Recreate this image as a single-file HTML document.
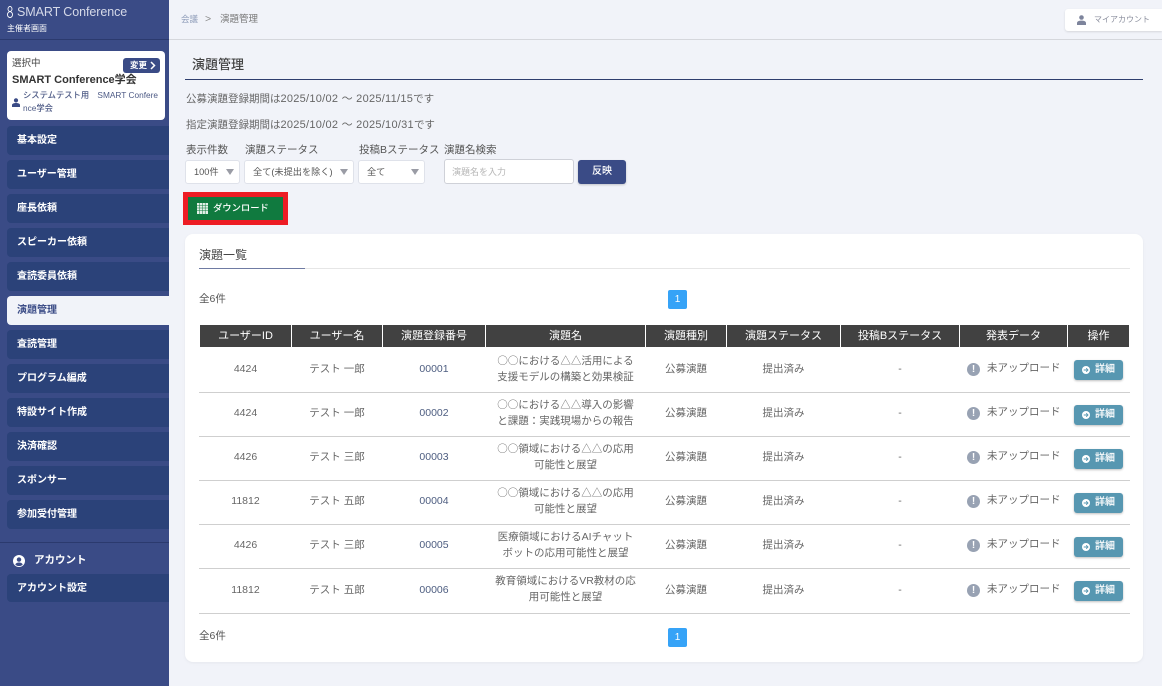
<!DOCTYPE html>
<html lang="ja"><head><meta charset="utf-8"><title>演題管理</title>
<style>
*{box-sizing:border-box}
html,body{margin:0;padding:0;width:1162px;height:686px;overflow:hidden;background:#f1f3f9;font-family:"Liberation Sans","Noto Sans CJK JP",sans-serif;color:#444}
.a{position:absolute;white-space:nowrap}
#side{position:absolute;left:0;top:0;width:169px;height:686px;background:#3a4b86}
.m{position:absolute;left:7px;width:162px;height:29px;background:#2b4279;border-radius:4px 0 0 4px;color:#fff;font-weight:700;font-size:10px;line-height:30px;padding-left:10px}
.m.on{background:#f1f3f9;color:#3a4b86}
.sel{position:absolute;background:#fff;border:1px solid #dfe2ea;border-radius:3px;height:24px;font-size:9.2px;line-height:23px;color:#555;padding-left:8px}
.sel:after{content:"";position:absolute;right:5px;top:8px;border:4.5px solid transparent;border-top:6px solid #9a9ca5;border-bottom:0}
.lb{font-size:10.5px;line-height:14px;color:#555;top:143px}
.th{position:absolute;top:325px;height:22px;background:#414141;color:#fff;font-size:11px;line-height:22px;text-align:center}
.c{position:absolute;text-align:center;font-size:10.5px;color:#666;white-space:nowrap;line-height:16px;padding-top:1px}
.c.t{padding-top:0}
.c b{font-weight:400;font-family:"Noto Sans CJK JP",sans-serif}
.ln{position:absolute;left:199px;width:931px;height:1px;background:#cfcfcf}
.btn{position:absolute;left:1074px;width:49px;height:20px;background:#5797b1;border-radius:3px;color:#f2f6f8;font-size:10px;font-weight:700;line-height:20px;padding-left:21px;box-shadow:0 1px 2px rgba(0,0,0,.25)}
.btn svg{position:absolute;left:8px;top:6px}
.ic{position:absolute;left:967px;width:13px;height:13px;border-radius:50%;background:#98a2b3;color:#fff;font-size:10px;font-weight:700;line-height:13px;text-align:center}
.pg{position:absolute;left:668px;width:19px;height:19px;background:#36a3f7;color:#fff;font-size:10px;line-height:19px;text-align:center;border-radius:2px}
.d{font-size:11px;letter-spacing:.27px}
</style></head><body>
<div id="side">
<svg class="a" style="left:7px;top:6px" width="6" height="12" viewBox="0 0 6 12"><g fill="none" stroke="#fff" stroke-width=".9"><ellipse cx="3" cy="3" rx="2" ry="2.500"/><ellipse cx="3" cy="8.600" rx="2.500" ry="2.900"/></g></svg>
<div class="a" style="left:17px;top:4px;font-size:12.5px;line-height:17px;color:#d5d9e8;letter-spacing:-.08px">SMART Conference</div>
<div class="a" style="left:7px;top:22px;font-size:8px;line-height:13px;color:#fff">主催者画面</div>
<div class="a" style="left:0;top:39px;width:169px;height:1px;background:#2b3a6e"></div>
<div class="a" style="left:7px;top:51px;width:158px;height:69px;background:#fff;border-radius:4px"></div>
<div class="a" style="left:12px;top:57px;font-size:9.500px;line-height:14px;color:#444">選択中</div>
<div class="a" style="left:123px;top:58px;width:37px;height:15px;background:#3a4b86;border-radius:3px;color:#fff;font-size:8.500px;font-weight:700;line-height:14px;padding-left:7px">変更
<svg class="a" style="left:27px;top:3px" width="6" height="9" viewBox="0 0 6 9"><path d="M1 1l3.500 3.500L1 8" fill="none" stroke="#fff" stroke-width="1.500"/></svg></div>
<div class="a" style="left:12px;top:72px;font-size:11px;font-weight:700;line-height:16px;color:#333">SMART Conference学会</div>
<svg class="a" style="left:12px;top:98px" width="8" height="9" viewBox="0 0 8 9"><circle cx="4" cy="2.400" r="2.100" fill="#3a4b86"/><path d="M0 9V7C0 5.600 2 5 4 5S8 5.600 8 7V9Z" fill="#3a4b86"/></svg>
<div class="a" style="left:23px;top:89px;font-size:8.300px;line-height:12.500px;color:#4d5a85;font-weight:500">システムテスト用　SMART Confere<br>nce学会</div>
<div class="m" style="top:126px">基本設定</div>
<div class="m" style="top:160px">ユーザー管理</div>
<div class="m" style="top:194px">座長依頼</div>
<div class="m" style="top:228px">スピーカー依頼</div>
<div class="m" style="top:262px">査読委員依頼</div>
<div class="m on" style="top:296px">演題管理</div>
<div class="m" style="top:330px">査読管理</div>
<div class="m" style="top:364px">プログラム編成</div>
<div class="m" style="top:398px">特設サイト作成</div>
<div class="m" style="top:432px">決済確認</div>
<div class="m" style="top:466px">スポンサー</div>
<div class="m" style="top:500px">参加受付管理</div>
<div class="a" style="left:0;top:542px;width:169px;height:1px;background:#2b3a6e"></div>
<svg class="a" style="left:13px;top:555px" width="12" height="12" viewBox="0 0 12 12"><circle cx="6" cy="6" r="6" fill="#fff"/><circle cx="6" cy="4.600" r="2.200" fill="#3a4b86"/><path d="M2.300 9.600C3 7.900 4.500 7.500 6 7.500S9 7.900 9.700 9.600C8.700 10.600 7.400 11 6 11S3.300 10.600 2.300 9.600Z" fill="#3a4b86"/></svg>
<div class="a" style="left:34px;top:552px;font-size:10.500px;font-weight:700;line-height:16px;color:#fff">アカウント</div>
<div class="m" style="top:574px;height:28px">アカウント設定</div>
</div>

<div class="a" style="left:181px;top:12px;font-size:8.500px;line-height:14px;color:#8d9bb8">会議</div>
<div class="a" style="left:205px;top:12px;font-size:10.500px;line-height:14px;color:#888">&gt;</div>
<div class="a" style="left:220px;top:13px;font-size:9.500px;line-height:14px;color:#777">演題管理</div>
<div class="a" style="left:169px;top:39px;width:993px;height:1px;background:#d5d7dc"></div>
<div class="a" style="left:1065px;top:9px;width:97px;height:22px;background:#fff;border-radius:3px 0 0 3px;box-shadow:0 1px 2px rgba(0,0,0,.12)"></div>
<svg class="a" style="left:1077px;top:15px" width="9" height="10" viewBox="0 0 9 10"><circle cx="4.500" cy="2.500" r="2.300" fill="#7d849c"/><path d="M0 10V8C0 6.300 2.200 5.600 4.500 5.600S9 6.300 9 8V10Z" fill="#7d849c"/></svg>
<div class="a" style="left:1094px;top:13px;font-size:8px;line-height:14px;color:#8b8f9e">マイアカウント</div>

<div class="a" style="left:192px;top:55px;font-size:13px;font-weight:500;line-height:19px;color:#444">演題管理</div>
<div class="a" style="left:185px;top:79px;width:958px;height:1px;background:#2f3e6e"></div>
<div class="a" style="left:186px;top:91px;font-size:10.500px;line-height:16px;color:#666">公募演題登録期間は<span class="d">2025/10/02 ～ 2025/11/15</span>です</div>
<div class="a" style="left:186px;top:117px;font-size:10.500px;line-height:16px;color:#666">指定演題登録期間は<span class="d">2025/10/02 ～ 2025/10/31</span>です</div>

<div class="a lb" style="left:186px">表示件数</div>
<div class="a lb" style="left:245px">演題ステータス</div>
<div class="a lb" style="left:359px">投稿Bステータス</div>
<div class="a lb" style="left:444px">演題名検索</div>
<div class="sel" style="left:185px;top:160px;width:55px">100件</div>
<div class="sel" style="left:244px;top:160px;width:110px">全て(未提出を除く)</div>
<div class="sel" style="left:358px;top:160px;width:67px">全て</div>
<div class="a" style="left:444px;top:159px;width:130px;height:25px;background:#fff;border:1px solid #cfd1d8;border-radius:3px;font-size:9px;line-height:24px;padding-left:7px;color:#b5b5b5">演題名を入力</div>
<div class="a" style="left:578px;top:160px;width:48px;height:24px;background:#3a4b86;border-radius:3px;color:#fff;font-size:10px;font-weight:500;line-height:24px;text-align:center;box-shadow:0 1px 2px rgba(0,0,0,.2)">反映</div>

<div class="a" style="left:183px;top:192px;width:105px;height:33px;background:#ed1c24"></div>
<div class="a" style="left:188px;top:197px;width:95px;height:23px;background:#107a3f;color:#fff;font-size:9.300px;font-weight:500;line-height:22px;padding-left:25px">ダウンロード</div>
<svg class="a" style="left:197px;top:203px" width="11" height="11" viewBox="0 0 11 11"><rect width="11" height="11" fill="#e4f0e8"/><path d="M0 2.500H11M0 5H11M0 7.500H11M2.700 0V11M5.500 0V11M8.200 0V11" stroke="#107a3f" stroke-width=".5"/></svg>

<div class="a" style="left:185px;top:234px;width:958px;height:428px;background:#fff;border-radius:8px;box-shadow:0 1px 3px rgba(0,0,0,.05)"></div>
<div class="a" style="left:199px;top:246px;font-size:12px;line-height:18px;color:#444">演題一覧</div>
<div class="a" style="left:199px;top:268px;width:931px;height:1px;background:#e6e6e6"></div>
<div class="a" style="left:199px;top:268px;width:106px;height:1px;background:#6f7ba3"></div>
<div class="a" style="left:199px;top:292px;font-size:10.500px;line-height:15px;color:#555">全6件</div>
<div class="pg" style="top:290px">1</div>

<div class="th" style="left:200px;width:91px">ユーザーID</div>
<div class="th" style="left:292px;width:90px">ユーザー名</div>
<div class="th" style="left:383px;width:102px">演題登録番号</div>
<div class="th" style="left:486px;width:159px">演題名</div>
<div class="th" style="left:646px;width:80px">演題種別</div>
<div class="th" style="left:727px;width:113px">演題ステータス</div>
<div class="th" style="left:841px;width:118px">投稿Bステータス</div>
<div class="th" style="left:960px;width:107px">発表データ</div>
<div class="th" style="left:1068px;width:61px">操作</div>

<div class="ln" style="top:392px"></div><div class="ln" style="top:436px"></div><div class="ln" style="top:480px"></div><div class="ln" style="top:524px"></div><div class="ln" style="top:568px"></div><div class="ln" style="top:613px"></div>

<!-- row 1 -->
<div class="c" style="left:200px;width:91px;top:360px">4424</div><div class="c" style="left:292px;width:90px;top:360px">テスト 一郎</div><div class="c" style="left:383px;width:102px;top:360px;color:#4d5d80">00001</div>
<div class="c t" style="left:486px;width:159px;top:353px"><b>○○</b>における△△活用による<br>支援モデルの構築と効果検証</div>
<div class="c" style="left:646px;width:80px;top:360px">公募演題</div><div class="c" style="left:727px;width:113px;top:360px">提出済み</div><div class="c" style="left:841px;width:118px;top:360px">-</div>
<div class="ic" style="top:363px">!</div><div class="c" style="left:987px;top:359px">未アップロード</div><div class="btn" style="top:360px"><svg width="8" height="8" viewBox="0 0 8 8"><circle cx="4" cy="4" r="4" fill="#fff"/><path d="M1.700 4H6M4.200 2.200L6 4 4.200 5.800" fill="none" stroke="#5797b1" stroke-width=".9"/></svg>詳細</div>
<!-- row 2 -->
<div class="c" style="left:200px;width:91px;top:404px">4424</div><div class="c" style="left:292px;width:90px;top:404px">テスト 一郎</div><div class="c" style="left:383px;width:102px;top:404px;color:#4d5d80">00002</div>
<div class="c t" style="left:486px;width:159px;top:397px"><b>○○</b>における△△導入の影響<br>と課題：実践現場からの報告</div>
<div class="c" style="left:646px;width:80px;top:404px">公募演題</div><div class="c" style="left:727px;width:113px;top:404px">提出済み</div><div class="c" style="left:841px;width:118px;top:404px">-</div>
<div class="ic" style="top:407px">!</div><div class="c" style="left:987px;top:403px">未アップロード</div><div class="btn" style="top:405px"><svg width="8" height="8" viewBox="0 0 8 8"><circle cx="4" cy="4" r="4" fill="#fff"/><path d="M1.700 4H6M4.200 2.200L6 4 4.200 5.800" fill="none" stroke="#5797b1" stroke-width=".9"/></svg>詳細</div>
<!-- row 3 -->
<div class="c" style="left:200px;width:91px;top:448px">4426</div><div class="c" style="left:292px;width:90px;top:448px">テスト 三郎</div><div class="c" style="left:383px;width:102px;top:448px;color:#4d5d80">00003</div>
<div class="c t" style="left:486px;width:159px;top:441px"><b>○○</b>領域における△△の応用<br>可能性と展望</div>
<div class="c" style="left:646px;width:80px;top:448px">公募演題</div><div class="c" style="left:727px;width:113px;top:448px">提出済み</div><div class="c" style="left:841px;width:118px;top:448px">-</div>
<div class="ic" style="top:451px">!</div><div class="c" style="left:987px;top:447px">未アップロード</div><div class="btn" style="top:449px"><svg width="8" height="8" viewBox="0 0 8 8"><circle cx="4" cy="4" r="4" fill="#fff"/><path d="M1.700 4H6M4.200 2.200L6 4 4.200 5.800" fill="none" stroke="#5797b1" stroke-width=".9"/></svg>詳細</div>
<!-- row 4 -->
<div class="c" style="left:200px;width:91px;top:492px">11812</div><div class="c" style="left:292px;width:90px;top:492px">テスト 五郎</div><div class="c" style="left:383px;width:102px;top:492px;color:#4d5d80">00004</div>
<div class="c t" style="left:486px;width:159px;top:485px"><b>○○</b>領域における△△の応用<br>可能性と展望</div>
<div class="c" style="left:646px;width:80px;top:492px">公募演題</div><div class="c" style="left:727px;width:113px;top:492px">提出済み</div><div class="c" style="left:841px;width:118px;top:492px">-</div>
<div class="ic" style="top:495px">!</div><div class="c" style="left:987px;top:491px">未アップロード</div><div class="btn" style="top:493px"><svg width="8" height="8" viewBox="0 0 8 8"><circle cx="4" cy="4" r="4" fill="#fff"/><path d="M1.700 4H6M4.200 2.200L6 4 4.200 5.800" fill="none" stroke="#5797b1" stroke-width=".9"/></svg>詳細</div>
<!-- row 5 -->
<div class="c" style="left:200px;width:91px;top:536px">4426</div><div class="c" style="left:292px;width:90px;top:536px">テスト 三郎</div><div class="c" style="left:383px;width:102px;top:536px;color:#4d5d80">00005</div>
<div class="c t" style="left:486px;width:159px;top:529px">医療領域におけるAIチャット<br>ボットの応用可能性と展望</div>
<div class="c" style="left:646px;width:80px;top:536px">公募演題</div><div class="c" style="left:727px;width:113px;top:536px">提出済み</div><div class="c" style="left:841px;width:118px;top:536px">-</div>
<div class="ic" style="top:539px">!</div><div class="c" style="left:987px;top:535px">未アップロード</div><div class="btn" style="top:537px"><svg width="8" height="8" viewBox="0 0 8 8"><circle cx="4" cy="4" r="4" fill="#fff"/><path d="M1.700 4H6M4.200 2.200L6 4 4.200 5.800" fill="none" stroke="#5797b1" stroke-width=".9"/></svg>詳細</div>
<!-- row 6 -->
<div class="c" style="left:200px;width:91px;top:581px">11812</div><div class="c" style="left:292px;width:90px;top:581px">テスト 五郎</div><div class="c" style="left:383px;width:102px;top:581px;color:#4d5d80">00006</div>
<div class="c t" style="left:486px;width:159px;top:573px">教育領域におけるVR教材の応<br>用可能性と展望</div>
<div class="c" style="left:646px;width:80px;top:581px">公募演題</div><div class="c" style="left:727px;width:113px;top:581px">提出済み</div><div class="c" style="left:841px;width:118px;top:581px">-</div>
<div class="ic" style="top:584px">!</div><div class="c" style="left:987px;top:580px">未アップロード</div><div class="btn" style="top:581px"><svg width="8" height="8" viewBox="0 0 8 8"><circle cx="4" cy="4" r="4" fill="#fff"/><path d="M1.700 4H6M4.200 2.200L6 4 4.200 5.800" fill="none" stroke="#5797b1" stroke-width=".9"/></svg>詳細</div>

<div class="a" style="left:199px;top:629px;font-size:10.500px;line-height:15px;color:#555">全6件</div>
<div class="pg" style="top:628px">1</div>
</body></html>
